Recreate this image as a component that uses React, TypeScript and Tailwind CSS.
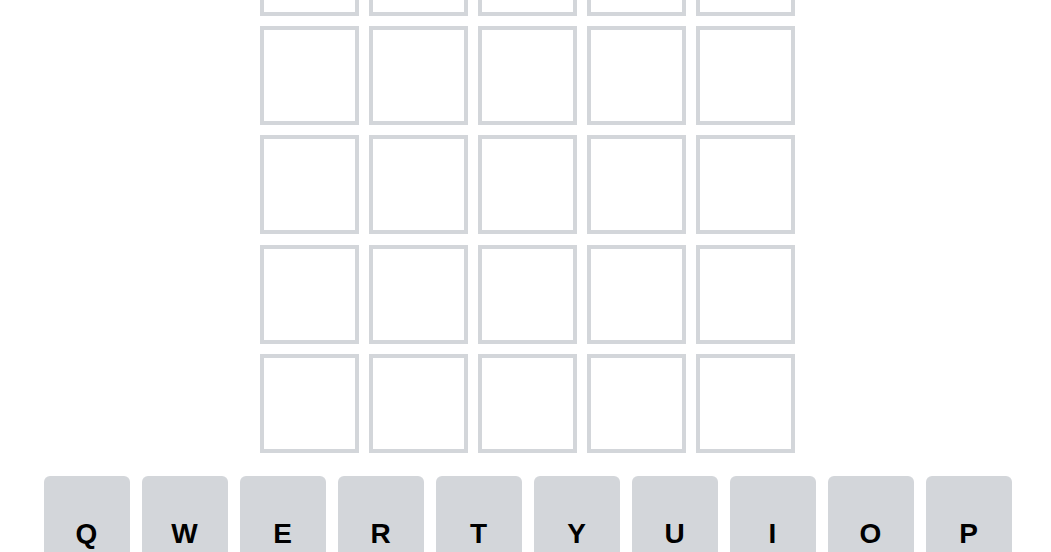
import React from "react";

const ROWS = 6;
const COLS = 5;
const KEYS = ["Q", "W", "E", "R", "T", "Y", "U", "I", "O", "P"];

function Tile() {
  return <div className="w-[99px] h-[99px] border-4 border-[#d3d6da] bg-white" />;
}

export default function App() {
  return (
    <div
      className="w-[1051px] h-[552px] overflow-hidden bg-white pl-[4px]"
      style={{ fontFamily: '"Liberation Sans", Arial, sans-serif' }}
    >
      {/* board is scrolled: first row sits above the fold */}
      <div className="mt-[-192.6px] flex flex-col items-center">
        <div className="flex flex-col gap-[10.3px]">
          {Array.from({ length: ROWS }).map((_, r) => (
            <div key={r} className="flex gap-[10px]">
              {Array.from({ length: COLS }).map((_, c) => (
                <Tile key={c} />
              ))}
            </div>
          ))}
        </div>

        <div className="mt-[23px] flex gap-[12px]">
          {KEYS.map((k) => (
            <button
              key={k}
              className="w-[86px] h-[116px] rounded-[6px] bg-[#d3d6da] flex items-center justify-center text-[28px] font-bold text-black"
            >
              {k}
            </button>
          ))}
        </div>
      </div>
    </div>
  );
}
